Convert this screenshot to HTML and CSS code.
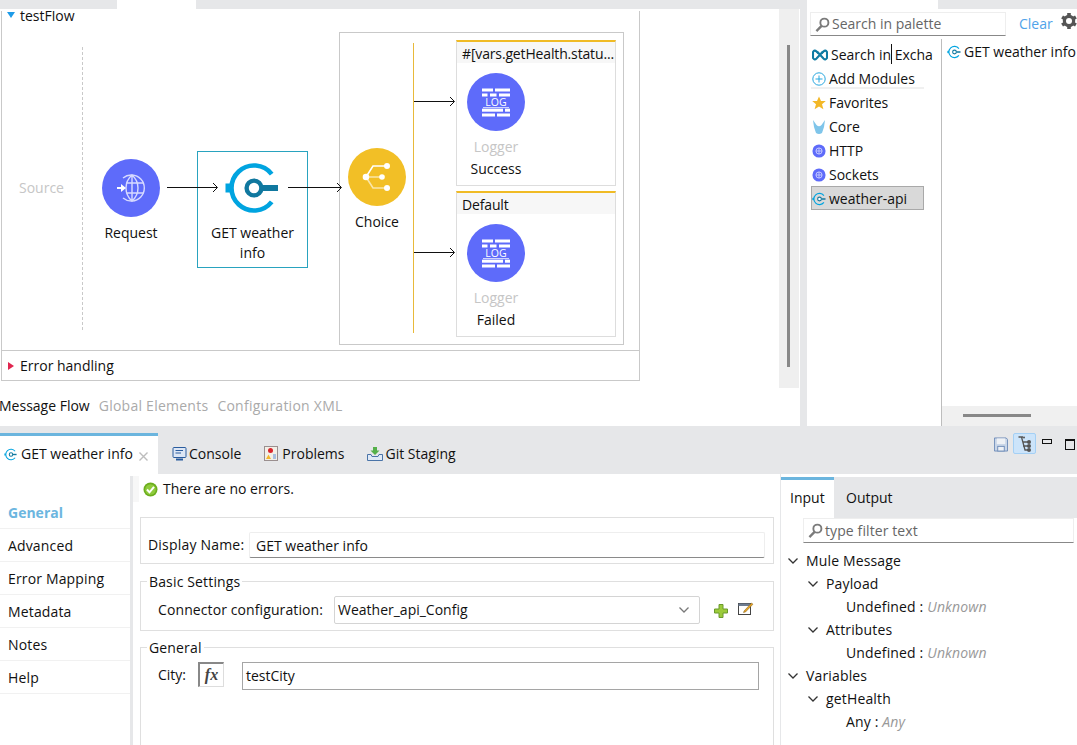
FILE: index.html
```html
<!DOCTYPE html>
<html lang="en">
<head>
<meta charset="utf-8">
<title>testFlow</title>
<link rel="stylesheet" href="styles.css">
</head>
<body>
<svg class="defs" width="0" height="0" aria-hidden="true">
  <symbol id="connector" viewBox="0 0 60 56">
    <path d="M47.700 14.100A22.500 22.500 0 1 0 47.700 41.900" fill="none" stroke="#00a4e0" stroke-width="4.600"/>
    <rect x="1.500" y="23.500" width="6" height="9" fill="#00a4e0"/>
    <circle cx="30" cy="28" r="7.400" fill="#fff" stroke="#10789f" stroke-width="4.400"/>
    <rect x="38" y="25" width="16" height="6" fill="#10789f"/>
  </symbol>
  <symbol id="logger" viewBox="-29 -29 58 58">
    <circle r="29" fill="#5e6bfa"/>
    <g fill="#fff">
      <rect x="-14" y="-13.500" width="11" height="3"/><rect x="-1" y="-13.500" width="15" height="3"/>
      <rect x="-14" y="-8.500" width="5.500" height="3"/><rect x="-6" y="-8.500" width="6.500" height="3"/><rect x="3" y="-8.500" width="11" height="3"/>
      <rect x="-13" y="5.300" width="26" height="0.800"/>
      <rect x="-14" y="6.700" width="21" height="3"/><rect x="9" y="6.700" width="5" height="3"/>
      <rect x="-14" y="11.500" width="13" height="3"/><rect x="1" y="11.500" width="13" height="3"/>
    </g>
    <text class="log-text" x="0" y="4.300" text-anchor="middle">LOG</text>
  </symbol>
  <symbol id="magnifier" viewBox="0 0 16 16">
    <circle cx="10" cy="6" r="4.300" fill="none" stroke="#7b7b7b" stroke-width="2"/>
    <path d="M7 9.500L1.500 15" stroke="#7b7b7b" stroke-width="2.500" fill="none"/>
  </symbol>
  <symbol id="minichev" viewBox="0 0 12 8">
    <path d="M1.500 1.500L6 6L10.500 1.500" fill="none" stroke="#333" stroke-width="1.300"/>
  </symbol>
  <symbol id="miniglobe" viewBox="0 0 16 16">
    <circle cx="8" cy="8" r="7.500" fill="#5e6bfa"/>
    <circle cx="8" cy="8" r="3.500" fill="none" stroke="#c8ccff" stroke-width="1.100"/>
    <path d="M8 4.500V11.500M4.500 8H11.500" stroke="#c8ccff" stroke-width="1"/>
  </symbol>
</svg>

<div class="top">
  <section class="editor">
    <div class="strip"><span class="strip-tab"></span></div>
    <div class="editor-body">
      <div class="flow">
        <div class="flow-title"><span class="tri-down"></span>testFlow</div>
        <div class="source">Source</div>
        <div class="dashed"></div>

        <svg class="wires" width="638" height="340" viewBox="0 0 638 340">
          <g fill="none" stroke="#111" stroke-width="1">
            <path d="M165 176.500H215M211 172L215.500 176.500L211 181"/>
            <path d="M286 176.500H339M335 172L339.500 176.500L335 181"/>
            <path d="M412 90.500H452M448 86L452.500 90.500L448 95"/>
            <path d="M412 241.500H452M448 237L452.500 241.500L448 246"/>
          </g>
        </svg>

        <div class="node node-request">
          <svg class="circle-icon" width="58" height="58" viewBox="-29 -29 58 58">
            <circle r="29" fill="#5e6bfa"/>
            <g fill="none" stroke="#d7daff" stroke-width="1.400">
              <path d="M-8 -10A13 13 0 1 1 -8 10"/>
              <path d="M1 -13C-7 -6 -7 6 1 13C9 6 9 -6 1 -13M1 -13V13M-5 -5H12.500M-5 5H12.500"/>
            </g>
            <path d="M-14 -1H-10V-4L-5 0L-10 4V1H-14Z" fill="#fff"/>
          </svg>
          <div class="node-label">Request</div>
        </div>

        <div class="node-box">
          <svg class="box-icon" width="60" height="56"><use href="#connector"/></svg>
          <div class="node-label box-label">GET weather<br>info</div>
        </div>

        <div class="choice">
          <div class="choice-line"></div>
          <div class="node node-choice">
            <svg class="circle-icon" width="58" height="58" viewBox="-29 -29 58 58">
              <circle r="29" fill="#f2bf26"/>
              <path d="M-11 0L-4 0H4M-11 0L-4 11H9" fill="none" stroke="#fae6a8" stroke-width="1.600"/>
              <path d="M-11 0L-4 -11H9" fill="none" stroke="#fff" stroke-width="1.600"/>
              <g fill="#fff"><circle cx="-11" r="3.300"/><circle cx="5" r="2.800"/><circle cx="10" cy="-11" r="3"/><circle cx="10" cy="11" r="3"/></g>
            </svg>
            <div class="node-label">Choice</div>
          </div>
        </div>

        <div class="branch branch-a">
          <div class="branch-head">#[vars.getHealth.statu...</div>
          <div class="branch-node">
            <svg width="58" height="58"><use href="#logger"/></svg>
            <div class="ghost">Logger</div>
            <div class="node-label">Success</div>
          </div>
        </div>
        <div class="branch branch-b">
          <div class="branch-head">Default</div>
          <div class="branch-node">
            <svg width="58" height="58"><use href="#logger"/></svg>
            <div class="ghost">Logger</div>
            <div class="node-label">Failed</div>
          </div>
        </div>

        <div class="error-row"><span class="tri-right"></span>Error handling</div>
      </div>
      <div class="vscroll"><span class="vthumb"></span></div>
    </div>
    <nav class="subtabs">
      <span class="subtab-on">Message Flow</span>
      <span>Global Elements</span>
      <span>Configuration XML</span>
    </nav>
  </section>

  <aside class="palette">
    <div class="palette-strip"></div>
    <div class="palette-search">
      <div class="search-box">
        <svg width="15" height="15"><use href="#magnifier"/></svg>
        <span>Search in palette</span>
      </div>
      <span class="clear">Clear</span>
      <svg class="gear" width="16" height="16" viewBox="-8 -8 16 16">
        <g fill="#555"><rect x="-1.800" y="-8" width="3.600" height="16"/><rect x="-1.800" y="-8" width="3.600" height="16" transform="rotate(60)"/><rect x="-1.800" y="-8" width="3.600" height="16" transform="rotate(120)"/></g>
        <circle r="4.700" fill="none" stroke="#555" stroke-width="3"/>
        <circle r="3" fill="#fff"/>
      </svg>
    </div>
    <div class="palette-body">
      <ul class="modules">
        <li class="module module-exchange">
          <svg width="16" height="14" viewBox="0 0 16 14"><path d="M5 3.500L11.500 10.500Q13.500 12.500 15 10L15 4Q13.500 1.500 11.500 3.500L9.500 5.500" fill="none" stroke="#0f7ba3" stroke-width="2.100"/><path d="M11 3.500L4.500 10.500Q2.500 12.500 1 10L1 4Q2.500 1.500 4.500 3.500L6.500 5.500" fill="none" stroke="#0f7ba3" stroke-width="2.100"/></svg>
          <span>Search in Exchange</span><i class="caret"></i>
        </li>
        <li class="module module-add">
          <svg width="14" height="14" viewBox="0 0 14 14"><circle cx="7" cy="7" r="6.200" fill="none" stroke="#27a7df" stroke-width="1"/><path d="M7 3.500V10.500M3.500 7H10.500" stroke="#27a7df" stroke-width="1"/></svg>
          <span>Add Modules</span>
        </li>
        <li class="module">
          <svg width="14" height="14" viewBox="0 0 14 14"><path d="M7 0.500L9 5H13.800L10 8.200L11.400 13.300L7 10.400L2.600 13.300L4 8.200L0.200 5H5Z" fill="#f3b827"/></svg>
          <span>Favorites</span>
        </li>
        <li class="module">
          <svg width="14" height="15" viewBox="0 0 14 15"><path d="M1 0L4.500 5Q7 7.500 9.500 5L13 0L12 7L10 13Q7 15 4 13L2 7Z" fill="#7fc5ea"/></svg>
          <span>Core</span>
        </li>
        <li class="module"><svg width="14" height="14"><use href="#miniglobe"/></svg><span>HTTP</span></li>
        <li class="module"><svg width="14" height="14"><use href="#miniglobe"/></svg><span>Sockets</span></li>
        <li class="module module-on"><svg width="15" height="14"><use href="#connector"/></svg><span>weather-api</span></li>
      </ul>
      <div class="ops">
        <div class="op"><svg width="15" height="14"><use href="#connector"/></svg><span>GET weather info</span></div>
        <div class="hscroll"><span class="hthumb"></span></div>
      </div>
    </div>
  </aside>
</div>

<section class="bottom">
  <div class="tabbar">
    <div class="tab tab-on">
      <svg width="14" height="13"><use href="#connector"/></svg>
      <span>GET weather info</span>
      <svg class="tab-x" width="9" height="9" viewBox="0 0 9 9"><path d="M0.500 0.500L8.500 8.500M8.500 0.500L0.500 8.500" stroke="#bdbdbd" stroke-width="1.400"/></svg>
    </div>
    <div class="tab tab-console">
      <svg width="15" height="14" viewBox="0 0 15 14"><rect x="1" y="0.500" width="13" height="10" rx="1" fill="#dce6f5" stroke="#2a5c9e"/><path d="M3.500 3.500H11M3.500 6H9" stroke="#2a5c9e"/><path d="M4 12.500H11" stroke="#2a5c9e" stroke-width="2"/></svg>
      <span>Console</span>
    </div>
    <div class="tab tab-problems">
      <svg width="14" height="15" viewBox="0 0 14 15"><rect x="0.500" y="0.500" width="13" height="14" fill="#f3efe6" stroke="#9a8f8f"/><circle cx="6.500" cy="4.500" r="2.500" fill="#d9252c"/><path d="M2 13L4.500 8.500L7 13Z" fill="#f3b72c"/><path d="M9 8V13H12V8" fill="#a8bfe0"/></svg>
      <span>Problems</span>
    </div>
    <div class="tab tab-git">
      <svg width="16" height="15" viewBox="0 0 16 15"><path d="M0.500 8.500H4L5 10.500H11L12 8.500H15.500V14.500H0.500Z" fill="#dfe9f6" stroke="#4a74a8"/><path d="M6 1H10V4.500H12.500L8 9L3.500 4.500H6Z" fill="#55b04a"/></svg>
      <span>Git Staging</span>
    </div>
    <div class="toolbar">
      <svg width="14" height="15" viewBox="0 0 15 15"><path d="M0.500 0.500H13L14.500 2V14.500H0.500Z" fill="#c9d6e8" stroke="#6d8bb8"/><rect x="3" y="1" width="9" height="6" fill="#eef1f5"/><rect x="4" y="9.500" width="7" height="5" fill="#eef1f5" stroke="#6d8bb8"/></svg>
      <span class="tool-on">
        <svg width="14" height="16" viewBox="0 0 14 16"><path d="M0.500 1H5M3.500 1L7 14H11M5 6H11M5 10H11" fill="none" stroke="#555" stroke-width="1.300"/><g fill="#555"><circle cx="11" cy="6" r="2"/><circle cx="11" cy="10" r="2"/><circle cx="11" cy="14" r="2"/><circle cx="6" cy="1.500" r="1"/></g></svg>
      </span>
      <span class="win-min"></span>
      <span class="win-max"></span>
    </div>
  </div>

  <div class="prop">
    <ul class="side">
      <li class="side-on">General</li>
      <li>Advanced</li>
      <li>Error Mapping</li>
      <li>Metadata</li>
      <li>Notes</li>
      <li>Help</li>
    </ul>
    <div class="gutter"></div>
    <div class="main">
      <div class="status">
        <svg width="15" height="15" viewBox="0 0 15 15"><circle cx="7.500" cy="7.500" r="7" fill="#6cae1e"/><circle cx="7.500" cy="7.500" r="5.300" fill="#8fcb3c"/><path d="M4 7.500L6.500 10.300L11 4.800" fill="none" stroke="#fff" stroke-width="2"/></svg>
        <span>There are no errors.</span>
      </div>
      <div class="group group-name">
        <label class="name-label">Display Name:</label>
        <div class="field field-name">GET weather info</div>
      </div>
      <div class="group group-basic">
        <span class="legend">Basic Settings</span>
        <label class="conn-label">Connector configuration:</label>
        <div class="select">
          <span>Weather_api_Config</span>
          <svg width="12" height="8"><use href="#minichev"/></svg>
        </div>
        <svg class="ic-plus" width="14" height="14" viewBox="0 0 14 14"><path d="M5 0.500H9V5H13.500V9H9V13.500H5V9H0.500V5H5Z" fill="#9ccb3b" stroke="#6a9a2c"/></svg>
        <svg class="ic-edit" width="16" height="15" viewBox="0 0 16 15"><rect x="0.500" y="2.500" width="12" height="11" fill="#fff" stroke="#444"/><rect x="0.500" y="2.500" width="12" height="2.500" fill="#6d7c91"/><path d="M6 10L13.500 2L15 3.200L7.500 11L5.500 11.500Z" fill="#e7a424" stroke="#7a5a1c" stroke-width="0.500"/></svg>
      </div>
      <div class="group group-general">
        <span class="legend">General</span>
        <label class="city-label">City:</label>
        <button class="fx" type="button">fx</button>
        <div class="field field-city">testCity</div>
      </div>
    </div>
    <div class="right">
      <div class="right-tabs">
        <span class="rtab rtab-on">Input</span>
        <span class="rtab">Output</span>
      </div>
      <div class="filter">
        <svg width="15" height="15"><use href="#magnifier"/></svg>
        <span>type filter text</span>
      </div>
      <ul class="tree">
        <li class="l0"><svg width="12" height="8"><use href="#minichev"/></svg>Mule Message</li>
        <li class="l1"><svg width="12" height="8"><use href="#minichev"/></svg>Payload</li>
        <li class="l2">Undefined : <em>Unknown</em></li>
        <li class="l1"><svg width="12" height="8"><use href="#minichev"/></svg>Attributes</li>
        <li class="l2">Undefined : <em>Unknown</em></li>
        <li class="l0"><svg width="12" height="8"><use href="#minichev"/></svg>Variables</li>
        <li class="l1"><svg width="12" height="8"><use href="#minichev"/></svg>getHealth</li>
        <li class="l2">Any : <em>Any</em></li>
      </ul>
    </div>
  </div>
</section>
</body>
</html>
```
FILE: styles.css
```css
* { box-sizing: border-box; }
html, body { margin: 0; padding: 0; }
body {
  width: 1077px;
  height: 745px;
  overflow: hidden;
  background: #fff;
  color: #111;
  font-family: "Open Sans", "Noto Sans", sans-serif;
  font-size: 14px;
  line-height: 20px;
}
ul { list-style: none; margin: 0; padding: 0; }
svg { display: block; flex: none; }
.defs { position: absolute; }
.log-text { font-family: "Open Sans", sans-serif; font-size: 10.500px; fill: #fff; }

/* ---- top ---- */
.top { display: flex; height: 426px; }
.editor { width: 800px; display: flex; flex-direction: column; }
.strip { height: 9px; background: #e6e7e9; flex: none; }
.strip-tab { display: block; width: 79px; height: 9px; margin-left: 117px; background: #fff; }
.editor-body { display: flex; height: 379px; padding-top: 2px; flex: none; }

.flow {
  position: relative;
  width: 639px;
  height: 370px;
  margin-left: 1px;
  border: 1px solid #c9c9c9;
  border-top: 0;
  overflow: hidden;
  flex: none;
}
.flow-title { height: 20px; margin-top: -5px; padding-left: 18px; position: relative; line-height: 20px; }
.tri-down {
  position: absolute; left: 5px; top: 6px;
  border-left: 4px solid transparent; border-right: 4px solid transparent;
  border-top: 6px solid #1e9be8;
}
.source { position: absolute; left: 17px; top: 167px; color: #c6c6c6; }
.dashed { position: absolute; left: 80px; top: 36px; height: 283px; border-left: 1px dashed #c9c9c9; }
.wires { position: absolute; left: 0; top: 0; z-index: 2; }

.node { position: absolute; width: 80px; display: flex; flex-direction: column; align-items: center; }
.node-label { text-align: center; line-height: 22px; }
.circle-icon { margin-bottom: 5px; }
.node-request { left: 89px; top: 148px; }

.node-box {
  position: absolute; left: 195px; top: 140px; width: 111px; height: 117px;
  border: 1px solid #29a3bf;
  display: flex; flex-direction: column; align-items: center;
}
.box-icon { margin: 8px 0 7px 2px; }
.box-label { line-height: 20px; }

.choice { position: absolute; left: 337px; top: 21px; width: 285px; height: 313px; border: 1px solid #c9c9c9; }
.choice-line { position: absolute; left: 73px; top: 10px; height: 290px; border-left: 1px solid #e8b93a; }
.node-choice { left: -3px; top: 115px; }

.branch {
  position: absolute; left: 454px; width: 160px; height: 146px;
  border: 1px solid #ddd; border-top: 2px solid #f0bb25;
}
.branch-a { top: 29px; }
.branch-b { top: 180px; }
.branch-head { height: 21px; padding-left: 5px; background: #f7f7f7; line-height: 23px; letter-spacing: -0.150px; white-space: nowrap; overflow: hidden; }
.branch-node { width: 78px; margin: 10px 0 0 0; display: flex; flex-direction: column; align-items: center; }
.ghost { color: #c6c6c6; margin-top: 5px; line-height: 22px; }

.error-row {
  position: absolute; left: 0; right: 0; top: 339px; height: 30px;
  border-top: 1px solid #c9c9c9; padding-left: 18px; line-height: 30px;
}
.tri-right {
  position: absolute; left: 6px; top: 11px;
  border-top: 4px solid transparent; border-bottom: 4px solid transparent;
  border-left: 6px solid #e0264f;
}

.vscroll { width: 20px; height: 379px; margin-left: 139px; margin-top: -2px; background: #efefef; padding: 36px 0 0 8px; }
.vthumb { display: block; width: 3px; height: 322px; background: #888; }

.subtabs { display: flex; gap: 9px; margin: 8px 0 0 -1px; color: #aaa; line-height: 20px; letter-spacing: 0.250px; white-space: nowrap; }
.subtab-on { color: #111; letter-spacing: 0; }

.palette { flex: 1; border-left: 7px solid #e6e7e9; display: flex; flex-direction: column; min-width: 0; }
.palette-strip { height: 9px; margin-left: 131px; background: #e6e7e9; flex: none; }
.palette-search { display: flex; align-items: center; height: 30px; padding: 3px 0 3px 3px; flex: none; }
.search-box {
  display: flex; align-items: center; gap: 2px; width: 196px; height: 24px; padding-left: 4px; flex: none;
  border: 1px solid #eee; border-bottom: 1px solid #888; color: #666; white-space: nowrap;
}
.clear { margin-left: 13px; color: #4fa3ea; flex: none; }
.gear { margin-left: 8px; margin-top: -7px; }
.palette-body { display: flex; flex: 1; min-height: 0; }
.modules { width: 134px; padding: 4px 0 0 4px; flex: none; }
.module { position: relative; display: flex; align-items: center; gap: 3px; width: 113px; height: 24px; padding-left: 1px; white-space: nowrap; overflow: hidden; }
.module-exchange { width: 122px; gap: 3px; overflow: hidden; }
.caret { position: absolute; left: 80px; top: 1px; width: 1px; height: 20px; background: #111; }
.module-add { background: linear-gradient(#f0f0f0, #f0f0f0) 0 20px / 100% 2px no-repeat; }
.module-on { margin-top: -1px; background: #d9d9d9; border: 1px solid #a9a9a9; padding: 1px 0 0 0; gap: 2px; }
.ops { flex: 1; border-left: 1px solid #bdbdbd; position: relative; padding: 3px 0 0 5px; min-width: 0; }
.op { display: flex; align-items: center; gap: 2px; height: 20px; white-space: nowrap; }
.hscroll { position: absolute; left: 0; right: 0; bottom: 0; height: 20px; background: #f0f0f0; padding: 8px 0 0 21px; }
.hthumb { display: block; width: 68px; height: 3px; background: #888; }

/* ---- bottom ---- */
.bottom { height: 319px; display: flex; flex-direction: column; }
.tabbar { display: flex; align-items: stretch; height: 48px; padding-top: 7px; background: #e6e7e9; flex: none; position: relative; }
.tab { display: flex; align-items: center; gap: 3px; white-space: nowrap; padding-top: 0; }
.tab-on { width: 158px; background: #fff; border-top: 3px solid #6bb5de; padding: 0 0 2px 4px; }
.tab-x { margin-left: 3px; margin-top: 4px; }
.tab-console { margin-left: 14px; gap: 2px; }
.tab-problems { margin-left: 23px; gap: 4px; }
.tab-git { margin-left: 22px; gap: 3px; }
.toolbar { margin-left: auto; display: flex; align-items: flex-start; padding-right: 2px; }
.toolbar > svg { margin-top: 4px; }
.tool-on {
  display: flex; align-items: center; justify-content: center;
  width: 23px; height: 21px; margin-left: 5px;
  background: #cce4fa; border: 1px solid #a4d0f5; border-radius: 2px;
}
.win-min { width: 10px; height: 5px; margin: 6px 0 0 6px; border: 1px solid #111; }
.win-max { width: 10px; height: 11px; margin: 6px 0 0 13px; border: 1px solid #111; border-top-width: 2px; }

.prop { flex: 1; display: flex; min-height: 0; }
.side { width: 130px; padding-top: 22px; flex: none; letter-spacing: 0.150px; }
.side li { height: 33px; padding: 1px 0 0 8px; line-height: 32px; border-bottom: 1px solid #f1f1f1; }
.side li.side-on { color: #6cb6e0; font-weight: 700; letter-spacing: 0; }
.gutter { width: 3px; margin-top: 2px; background: #e6e7e9; flex: none; }
.main { width: 647px; padding: 0 6px 0 7px; flex: none; }
.status {
  display: flex; align-items: center; gap: 5px; height: 26px; margin: 2px 0 0 -7px;
  border-left: 6px solid #f7f7f7; padding: 0 0 0 4px; width: 300px;
}
.group { position: relative; display: flex; border: 1px solid #dfdfdf; }
.legend { position: absolute; left: 6px; top: -10px; padding: 0 2px; background: #fff; line-height: 20px; letter-spacing: 0.150px; }
.group-name { height: 47px; margin-top: 15px; padding: 14px 8px 0 7px; }
.name-label { width: 101px; padding-top: 3px; flex: none; letter-spacing: 0.200px; }
.field { background: #fff; white-space: nowrap; }
.field-name { flex: 1; height: 26px; padding: 3px 6px 0; border: 1px solid #eee; border-bottom: 1px solid #8a8a8a; border-radius: 2px; }
.group-basic { height: 50px; margin-top: 17px; padding: 14px 0 0 17px; }
.conn-label { width: 176px; padding-top: 4px; flex: none; letter-spacing: 0.100px; }
.select {
  display: flex; align-items: center; justify-content: space-between;
  width: 366px; height: 28px; padding: 0 9px 0 3px;
  border: 1px solid #d4d4d4; border-radius: 2px; flex: none;
}
.select svg { opacity: 0.650; }
.ic-plus { margin: 8px 0 0 14px; }
.ic-edit { margin: 5px 0 0 10px; }
.group-general { height: 120px; margin-top: 16px; padding: 14px 0 0 17px; }
.city-label { width: 40px; padding-top: 3px; flex: none; }
.fx {
  width: 26px; height: 25px; padding: 0; background: #fff;
  border: 1px solid #ddd; border-left: 2px solid #888; border-top: 2px solid #888;
  font-family: "Liberation Serif", serif; font-style: italic; font-weight: 700; font-size: 16px; line-height: 18px; color: #444;
  flex: none;
}
.field-city { width: 517px; height: 28px; margin-left: 18px; padding: 3px 3px 0; border: 1px solid #a5a5a5; flex: none; }

.right { flex: 1; border-left: 1px solid #e6e7e9; min-width: 0; padding-top: 3px; }
.right-tabs { display: flex; height: 41px; background: #e6e7e9; }
.rtab { padding: 11px 12px 0; }
.rtab-on { width: 53px; padding: 8px 0 0 9px; background: #fff; border-top: 3px solid #6bb5de; }
.filter {
  display: flex; align-items: center; gap: 2px; width: 271px; height: 25px; margin-left: 22px; padding-left: 4px;
  background: #fff; border: 1px solid #eee; border-bottom: 1px solid #888; color: #666; letter-spacing: 0.100px; white-space: nowrap; position: relative;
}
.tree { margin-top: 6px; letter-spacing: 0.150px; }
.tree li { display: flex; align-items: center; height: 23px; white-space: pre; }
.tree li svg { margin-right: 7px; }
.tree em { color: #999; }
.l0 { padding-left: 6px; }
.l1 { padding-left: 26px; }
.l2 { padding-left: 65px; }
```
